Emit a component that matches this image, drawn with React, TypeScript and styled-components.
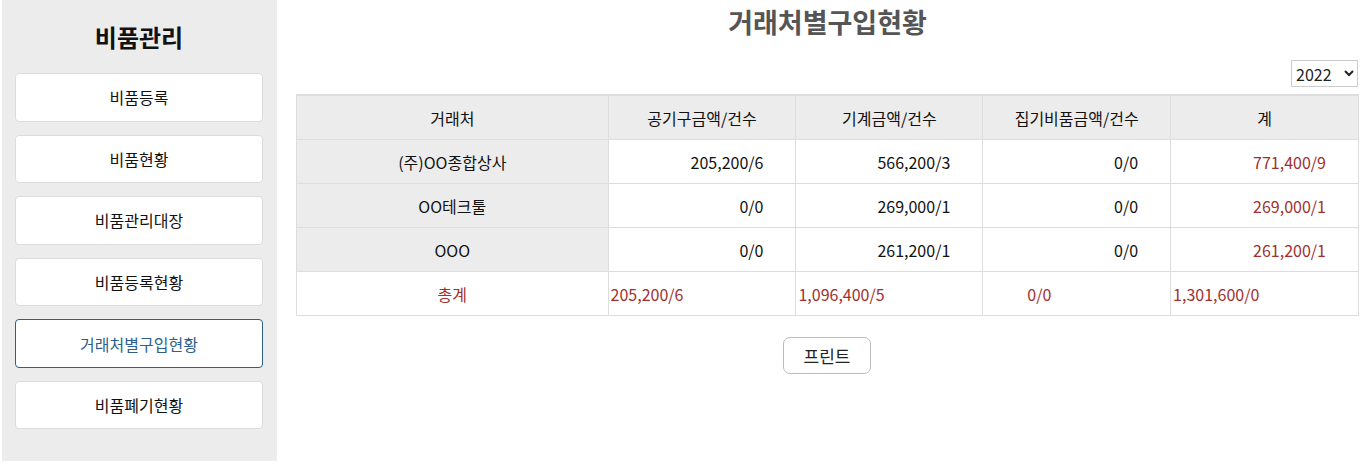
import styled, { createGlobalStyle } from "styled-components";

const GlobalStyle = createGlobalStyle`
  body {
    margin: 0;
    font-family: "Noto Sans CJK KR", "Noto Sans", sans-serif;
    color: #111;
    background: #fff;
  }
`;

const Layout = styled.div`
  display: flex;
  padding-left: 2px;
  width: 1362px;
`;
const Side = styled.nav`
  display: flex;
  flex-direction: column;
  width: 275px;
  height: 461px;
  background-color: #ececec;
  padding: 19px 14px 0 13px;
  box-sizing: border-box;
  h1 {
    text-align: center;
    font-size: 24px;
    font-weight: 700;
    margin: 0 0 18px;
    line-height: 36px;
  }
`;
const MenuBtn = styled.div<{ active?: boolean }>`
  display: flex;
  justify-content: center;
  align-items: center;
  height: 48.5px;
  box-sizing: border-box;
  margin-bottom: 13.1px;
  background-color: #fff;
  border: 1px solid ${(props) => (props.active ? "#2e5f8c" : "#dcdcdc")};
  border-radius: 4px;
  color: ${(props) => (props.active ? "#2e5f8c" : "#111")};
  font-size: 16px;
`;
const Main = styled.main`
  flex: 1;
  display: flex;
  flex-direction: column;
  padding: 0 5px 0 19px;
`;
const Title = styled.h2`
  text-align: center;
  font-size: 27px;
  font-weight: 700;
  color: #555;
  margin: 4px 0 20px;
  line-height: 36px;
`;
const Toolbar = styled.div`
  display: flex;
  justify-content: flex-end;
  margin-bottom: 7px;
`;
const YearSelect = styled.select`
  width: 67px;
  height: 27px;
  font-family: "Noto Sans CJK KR", "Noto Sans", sans-serif;
  font-size: 16px;
  border: 1px solid #ccc;
  background: #fff;
  color: #222;
  margin-right: 1px;
`;
const Table = styled.table`
  width: 100%;
  border-collapse: collapse;
  border-top: 2px solid #ddd;
  font-size: 16px;
  th,
  td {
    border: 1px solid #ddd;
    height: 43px;
    padding: 0;
  }
  th {
    background-color: #ececec;
    font-weight: 400;
  }
`;
const NameCell = styled.td`
  background-color: #ececec;
  text-align: center;
`;
const NumCell = styled.td<{ total?: boolean }>`
  text-align: right;
  padding-right: 32px !important;
  color: ${(props) => (props.total ? "#a0302e" : "#111")};
`;
const SumCell = styled.td<{ pad?: number; center?: boolean }>`
  color: #a0302e;
  text-align: ${(props) => (props.center ? "center" : "left")};
  padding-left: ${(props) => props.pad ?? 2}px !important;
`;
const BtnRow = styled.div`
  display: flex;
  justify-content: center;
  margin-top: 21px;
`;
const PrintBtn = styled.button`
  width: 88px;
  height: 37px;
  background: #fff;
  border: 1px solid #bbb;
  border-radius: 7px;
  font-family: "Noto Sans CJK KR", "Noto Sans", sans-serif;
  font-size: 17px;
  color: #222;
  margin-left: -1px;
`;

const menus = ["비품등록", "비품현황", "비품관리대장", "비품등록현황", "거래처별구입현황", "비품폐기현황"];

const rows = [
  { name: "(주)OO종합상사", a: "205,200/6", b: "566,200/3", c: "0/0", t: "771,400/9" },
  { name: "OO테크툴", a: "0/0", b: "269,000/1", c: "0/0", t: "269,000/1" },
  { name: "OOO", a: "0/0", b: "261,200/1", c: "0/0", t: "261,200/1" },
];

function App() {
  return (
    <Layout>
      <GlobalStyle />
      <Side>
        <h1>비품관리</h1>
        {menus.map((m) => (
          <MenuBtn key={m} active={m === "거래처별구입현황"}>
            {m}
          </MenuBtn>
        ))}
      </Side>
      <Main>
        <Title>거래처별구입현황</Title>
        <Toolbar>
          <YearSelect defaultValue="2022">
            <option>2022</option>
            <option>2021</option>
          </YearSelect>
        </Toolbar>
        <Table>
          <colgroup>
            <col style={{ width: 312 }} />
            <col style={{ width: 188 }} />
            <col style={{ width: 187 }} />
            <col style={{ width: 188 }} />
            <col style={{ width: 188 }} />
          </colgroup>
          <thead>
            <tr>
              <th>거래처</th>
              <th>공기구금액/건수</th>
              <th>기계금액/건수</th>
              <th>집기비품금액/건수</th>
              <th>계</th>
            </tr>
          </thead>
          <tbody>
            {rows.map((r) => (
              <tr key={r.name}>
                <NameCell>{r.name}</NameCell>
                <NumCell>{r.a}</NumCell>
                <NumCell>{r.b}</NumCell>
                <NumCell>{r.c}</NumCell>
                <NumCell total>{r.t}</NumCell>
              </tr>
            ))}
            <tr>
              <SumCell center pad={0}>총계</SumCell>
              <SumCell>205,200/6</SumCell>
              <SumCell>1,096,400/5</SumCell>
              <SumCell pad={44}>0/0</SumCell>
              <SumCell>1,301,600/0</SumCell>
            </tr>
          </tbody>
        </Table>
        <BtnRow>
          <PrintBtn>프린트</PrintBtn>
        </BtnRow>
      </Main>
    </Layout>
  );
}

export default App;
